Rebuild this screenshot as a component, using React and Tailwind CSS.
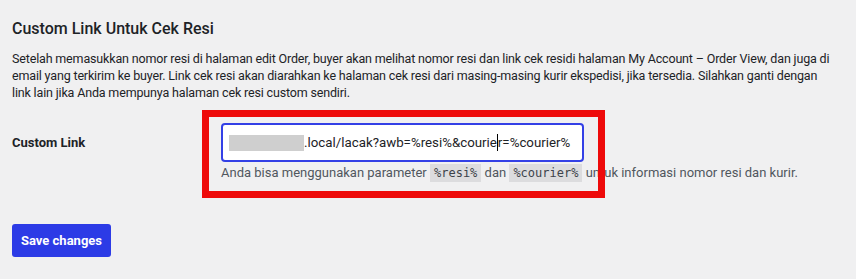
import React from 'react';

const FONT = { fontFamily: 'Roboto, "Noto Sans", sans-serif' };

function Code({ children }) {
  return (
    <code className="bg-[#dcdcde] px-[4px] py-[2px] font-['DejaVu_Sans_Mono',monospace] text-[12px] text-[#3c434a]">
      {children}
    </code>
  );
}

export default function App() {
  return (
    <div className="relative min-h-[279px] bg-[#f0f0f1] px-3 pt-[18px] text-[#1d2327]" style={FONT}>
      <h2 className="text-[16px] font-medium leading-[22px]">Custom Link Untuk Cek Resi</h2>

      <p className="mt-[10px] whitespace-nowrap text-[12.5px] leading-[17px] tracking-[-0.16px]">
        Setelah memasukkan nomor resi di halaman edit Order, buyer akan melihat nomor resi dan link cek residi halaman My Account – Order View, dan juga di
        <br />
        email yang terkirim ke buyer. Link cek resi akan diarahkan ke halaman cek resi dari masing-masing kurir ekspedisi, jika tersedia. Silahkan ganti dengan
        <br />
        link lain jika Anda mempunya halaman cek resi custom sendiri.
      </p>

      {/* form row */}
      <div className="mt-[22px] flex">
        <div className="w-[209px] shrink-0 pt-[10px] text-[13px] font-bold">Custom Link</div>
        <div className="flex flex-col items-start">
          <div className="flex h-[39px] w-[363px] items-center whitespace-nowrap rounded-[4px] border-2 border-[#3340e6] bg-white pl-[6px] text-[13.3px]">
            <span className="h-[16px] w-[75px] shrink-0 bg-[#cfcfcf]" />
            <span>.local/lacak?awb=%resi%&amp;courie</span>
            <span className="h-[17px] w-px shrink-0 bg-black" />
            <span>r=%courier%</span>
          </div>
          <p className="mt-[1px] whitespace-nowrap text-[13px] leading-[20px] text-[#50575e]">
            Anda bisa menggunakan parameter <Code>%resi%</Code> dan <Code>%courier%</Code> untuk informasi nomor resi dan kurir.
          </p>
        </div>
      </div>

      <button className="mt-[41px] h-[33px] w-[99px] rounded-[3px] bg-[#2c3be6] text-[13px] font-bold text-white">
        Save changes
      </button>

      {/* annotation box */}
      <div className="pointer-events-none absolute left-[202px] top-[110px] h-[88px] w-[403px] border-[7px] border-[#ee0a0a]" />
    </div>
  );
}
